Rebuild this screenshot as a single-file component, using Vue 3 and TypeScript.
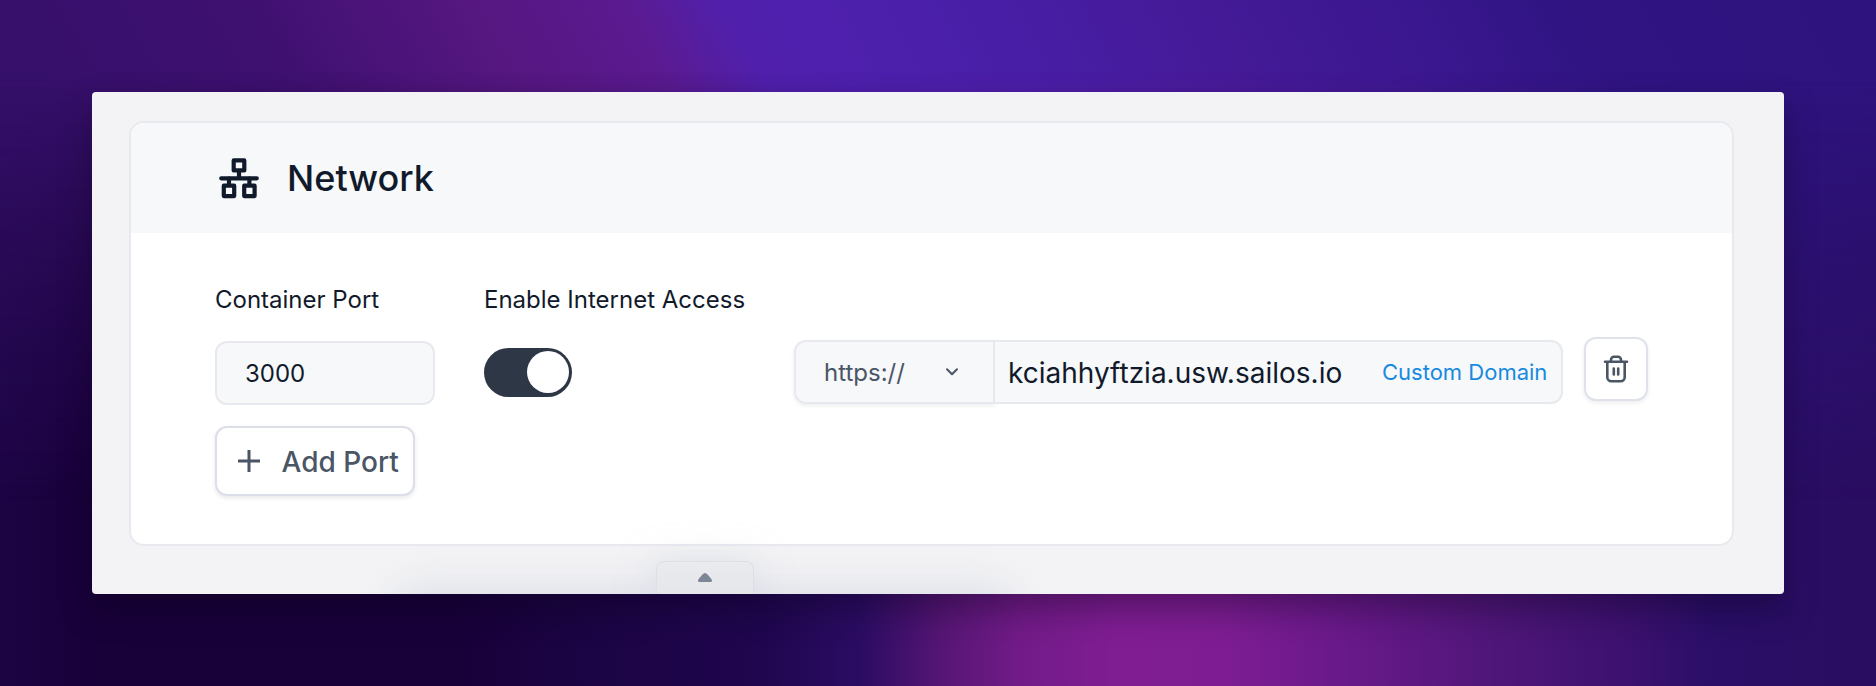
<script setup lang="ts">
import { ref } from 'vue'

const port = ref('3000')
const internetAccess = ref(true)
</script>

<template>
  <div class="backdrop">
    <main class="panel">
      <section class="card">
        <header class="card-header">
          <svg class="network-icon" viewBox="0 0 24 24" fill="none" stroke="currentColor" stroke-width="2.1" stroke-linejoin="round">
            <rect x="9.350" y="3.200" width="5.300" height="5" />
            <path d="M12 9v3M3.100 12.150h17.800M7 12v3.500M17.200 12v3.500" stroke-linecap="round" />
            <rect x="4.400" y="15.850" width="5.200" height="5.200" />
            <rect x="14.600" y="15.850" width="5.200" height="5.200" />
          </svg>
          <h2>Network</h2>
        </header>
        <div class="card-body">
          <div class="row">
            <div class="col port-col">
              <label>Container Port</label>
              <div class="port-input"><span>{{ port }}</span></div>
            </div>
            <div class="col access-col">
              <label>Enable Internet Access</label>
              <button class="toggle" :class="{ on: internetAccess }" @click="internetAccess = !internetAccess">
                <span class="knob"></span>
              </button>
            </div>
            <div class="domain">
              <div class="scheme">
                <span>https://</span>
                <svg viewBox="0 0 12 8" fill="none" stroke="currentColor" stroke-width="2" stroke-linecap="round" stroke-linejoin="round">
                  <path d="M1 1.200l5 5 5-5" />
                </svg>
              </div>
              <div class="host">
                <span class="host-name">kciahhyftzia.usw.sailos.io</span>
                <a class="custom">Custom Domain</a>
              </div>
            </div>
            <button class="trash" aria-label="Delete">
              <svg viewBox="0 0 26 28" fill="none" stroke="currentColor" stroke-width="2.6" stroke-linecap="round" stroke-linejoin="round">
                <path d="M2 6.700h22M4.300 6.700v15.600a4 4 0 0 0 4 4h9.400a4 4 0 0 0 4-4V6.700M8 6.500V4.800a3 3 0 0 1 3-3h4a3 3 0 0 1 3 3v1.700M10.800 13.500v6M15.200 13.500v6" />
              </svg>
            </button>
          </div>
          <button class="add">
            <svg viewBox="0 0 22 22" fill="none" stroke="currentColor" stroke-width="3">
              <path d="M11 0v22M0 11h22" />
            </svg>
            <span>Add Port</span>
          </button>
        </div>
      </section>
      <div class="drawer"></div>
      <div class="drawer-tab">
        <svg viewBox="0 0 14 9"><path d="M7 0C8 0 9 1 10 2L13 5.500C14.300 7 14.300 9 13 9H1C-.3 9-.3 7 1 5.500L4 2C5 1 6 0 7 0Z" fill="#7d8694" /></svg>
      </div>
    </main>
  </div>
</template>

<style>
body {
  margin: 0;
}
</style>

<style scoped>
* {
  box-sizing: border-box;
}
.backdrop {
  position: relative;
  width: 1876px;
  height: 686px;
  padding: 92px;
  overflow: hidden;
  font-family: Inter, sans-serif;
  color: #111a2b;
  background: linear-gradient(
    90deg,
    #1c0444 0,
    #180039 100px,
    #180039 450px,
    #1b0442 560px,
    #1f064e 760px,
    #2b0c63 860px,
    #571675 945px,
    #721b88 1020px,
    #801d93 1120px,
    #7e1d93 1220px,
    #681989 1350px,
    #4e1678 1500px,
    #3a106e 1640px,
    #2a0e68 1710px,
    #290d60 1876px
  );
}
.backdrop::before {
  content: '';
  position: absolute;
  inset: 0;
  background: linear-gradient(
    62deg,
    #36106b 16%,
    #3e1070 26.8%,
    #561781 37.4%,
    #5b1a90 44%,
    #5020ac 48.5%,
    #4e20ad 52.4%,
    #481ea6 60.7%,
    #451a98 69%,
    #3b1790 77.8%,
    #2f1482 86.6%,
    #2e137e 98.7%
  );
  mask-image: linear-gradient(#000 70px, rgba(0, 0, 0, 0.45) 260px, transparent 500px);
}
.panel {
  position: relative;
  width: 1692px;
  height: 502px;
  padding: 29px 50px 48px 37px;
  background: #f3f3f5;
  border-radius: 4px;
  box-shadow: 0 16px 32px rgba(10, 0, 25, 0.36);
  overflow: hidden;
}
.card {
  height: 425px;
  border: 2px solid #e8e9ef;
  border-radius: 15px;
  background: #fff;
  overflow: hidden;
}
.card-header {
  display: flex;
  align-items: center;
  height: 110px;
  padding-left: 84px;
  background: #f6f8fa;
}
.network-icon {
  width: 48px;
  height: 48px;
}
h2 {
  margin: 0 0 0 24px;
  font-size: 36px;
  line-height: 44px;
  font-weight: 500;
}
.card-body {
  padding: 49px 84px 0;
}
.row {
  display: flex;
}
.col {
  display: flex;
  flex-direction: column;
}
.port-col {
  width: 269px;
}
.access-col {
  width: 310px;
}
label {
  height: 59px;
  font-size: 24px;
  line-height: 36px;
  white-space: nowrap;
}
.port-input {
  display: flex;
  align-items: center;
  width: 220px;
  height: 64px;
  padding-left: 28px;
  font-size: 24px;
  background: #f6f8fa;
  border: 2px solid #e8e9ef;
  border-radius: 12px;
}
.toggle {
  display: flex;
  align-items: flex-start;
  width: 88px;
  height: 49px;
  margin-top: 7px;
  padding: 3px;
  border: 0;
  border-radius: 25px;
  background: #2e3746;
}
.toggle.on {
  justify-content: flex-end;
}
.knob {
  width: 42px;
  height: 42px;
  border-radius: 50%;
  background: #fff;
}
.domain {
  display: flex;
  width: 769px;
  height: 64px;
  margin-top: 58px;
}
.scheme {
  display: flex;
  align-items: center;
  width: 201px;
  padding-left: 28px;
  font-size: 24px;
  color: #4a5565;
  background: #f6f8fa;
  border: 2px solid #e8e9ef;
  border-radius: 12px 0 0 12px;
  box-shadow: 0 2px 4px rgba(20, 30, 60, 0.07);
}
.scheme svg {
  width: 12px;
  height: 8px;
  margin-left: 41px;
}
.host {
  display: flex;
  align-items: center;
  flex: 1;
  padding-left: 13px;
  background: #f6f8fa;
  border: 2px solid #e8e9ef;
  border-left: 0;
  border-radius: 0 12px 12px 0;
}
.host-name {
  width: 374px;
  padding-top: 1px;
  font-size: 28px;
  white-space: nowrap;
}
.custom {
  font-size: 22px;
  color: #168ae0;
  white-space: nowrap;
}
.trash {
  display: flex;
  align-items: center;
  justify-content: center;
  width: 64px;
  height: 64px;
  margin: 55px 0 0 21px;
  padding: 0;
  color: #4a5565;
  background: #fff;
  border: 2px solid #dfe2ea;
  border-radius: 12px;
  box-shadow: 0 2px 4px rgba(20, 30, 60, 0.08);
}
.trash svg {
  width: 26px;
  height: 28px;
}
.add {
  display: flex;
  align-items: center;
  width: 200px;
  height: 70px;
  margin-top: 21px;
  padding: 0 0 0 21px;
  font: 500 28px Inter, sans-serif;
  color: #4a5565;
  white-space: nowrap;
  background: #fff;
  border: 2px solid #dcdfe8;
  border-radius: 12px;
  box-shadow: 0 2px 4px rgba(20, 30, 60, 0.1);
}
.add svg {
  width: 22px;
  height: 22px;
  margin-right: 21.5px;
}
.add span {
  padding-top: 2px;
}
.drawer-tab {
  position: absolute;
  left: 564px;
  bottom: 0;
  width: 98px;
  height: 33px;
  padding-top: 11px;
  text-align: center;
  line-height: 0;
  background: linear-gradient(#eaebef, #e4e6ea);
  border: 1px solid #dddfe7;
  border-bottom: 0;
  border-radius: 8px 8px 0 0;
  box-shadow: 0 4px 36px rgba(200, 205, 220, 0.6);
}
.drawer-tab svg {
  width: 14px;
  height: 9px;
}
.drawer {
  position: absolute;
  left: 312px;
  bottom: -64px;
  width: 600px;
  height: 60px;
  box-shadow: 0 0 44px 4px rgba(200, 205, 220, 0.65);
}
</style>
